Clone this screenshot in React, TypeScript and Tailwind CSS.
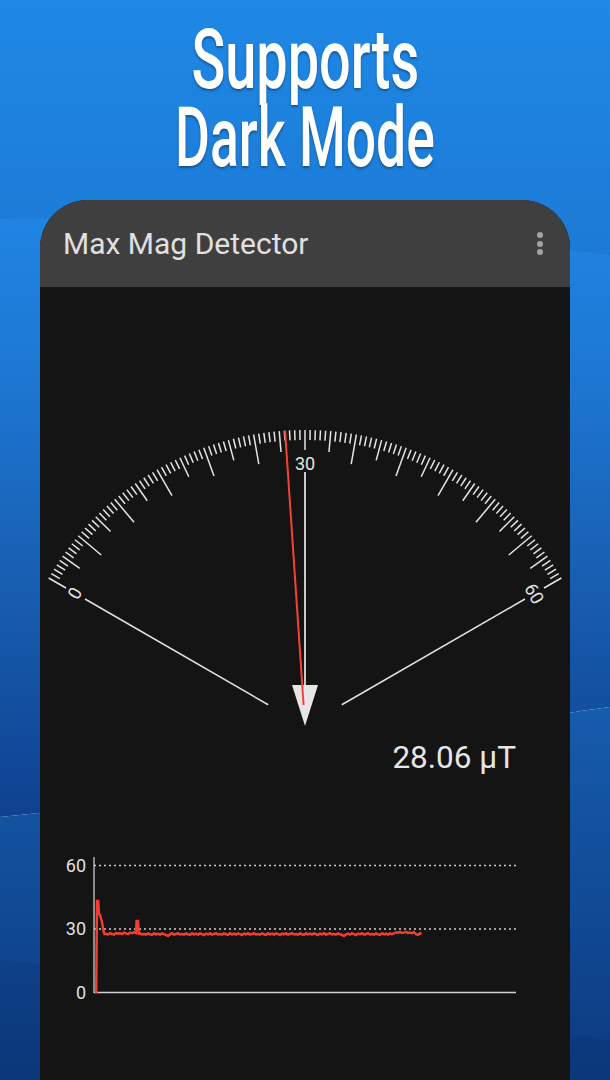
const GAUGE_CX = 305
const GAUGE_CY = 726

function polar(deg: number, r: number) {
  const a = (deg * Math.PI) / 180
  return { x: GAUGE_CX + r * Math.sin(a), y: GAUGE_CY - r * Math.cos(a) }
}

const font = "'Roboto', 'Liberation Sans', sans-serif"

function Backdrop() {
  return (
    <svg className="absolute inset-0" width="610" height="1080" viewBox="0 0 610 1080">
      <defs>
        <linearGradient id="mid" gradientUnits="userSpaceOnUse" x1="0" y1="219" x2="0" y2="817">
          <stop offset="0" stopColor="#2084e2" />
          <stop offset="0.25" stopColor="#1d78d4" />
          <stop offset="0.6" stopColor="#185fb2" />
          <stop offset="1" stopColor="#0f4190" />
        </linearGradient>
        <linearGradient id="low" gradientUnits="userSpaceOnUse" x1="0" y1="707" x2="0" y2="1080">
          <stop offset="0" stopColor="#165cad" />
          <stop offset="1" stopColor="#0c3a80" />
        </linearGradient>
      </defs>
      <path d="M0 219 C200 215 400 230 610 255 V707 C400 735 200 800 0 817 Z" fill="url(#mid)" />
      <path d="M0 817 C200 800 400 735 610 707 V1080 H0 Z" fill="url(#low)" />
      <path d="M0 960 C200 975 400 1010 610 1040 V1080 H0 Z" fill="#000000" fillOpacity={0.05} />
    </svg>
  )
}

function Gauge() {
  const ticks = []
  for (let d = -60; d <= 60; d++) {
    let inner = 286
    if (d % 5 === 0) inner = 275
    if (d % 10 === 0) inner = 266
    if (d % 60 === 0) inner = 276
    const a = polar(d, 296)
    const b = polar(d, inner)
    ticks.push(<line key={d} x1={a.x} y1={a.y} x2={b.x} y2={b.y} stroke="#e4e4e4" strokeWidth={1.5} />)
  }
  const rays = [-60, 60].map((d) => {
    const a = polar(d, 254)
    const b = polar(d, 42.5)
    return <line key={d} x1={a.x} y1={a.y} x2={b.x} y2={b.y} stroke="#e0e0e0" strokeWidth={1.5} />
  })
  const n0 = polar(-60, 266)
  const n1 = polar(60, 265)
  const needleTop = polar(-3.86, 296)
  const needleEnd = polar(-3.86, 21)
  return (
    <svg width="530" height="320" viewBox="40 420 530 320" className="block">
      {ticks}
      {rays}
      <line x1={305} y1={472} x2={305} y2={700} stroke="#c8c8c8" strokeWidth={2} />
      <text x={305} y={470} fontSize={18} fill="#e4e4e4" textAnchor="middle" fontFamily={font}>30</text>
      <text transform={`translate(${n0.x} ${n0.y}) rotate(-60)`} y={6.5} fontSize={18} fill="#e4e4e4" textAnchor="middle" fontFamily={font}>0</text>
      <text transform={`translate(${n1.x} ${n1.y}) rotate(60)`} y={6.5} fontSize={18} fill="#e4e4e4" textAnchor="middle" fontFamily={font}>60</text>
      <polygon points="292,685 318,685 305,726" fill="#e6e6e6" />
      <line x1={needleTop.x} y1={needleTop.y} x2={needleEnd.x} y2={needleEnd.y} stroke="#f44336" strokeWidth={2} />
    </svg>
  )
}

function seriesPoints() {
  const pts: [number, number][] = [
    [95, 992], [96.2, 992], [97, 901], [98.2, 901], [99, 914], [100, 915], [102, 922], [103.5, 931], [104.5, 934],
  ]
  const noise = [0, 1, -1, 0.4, 1.5, -1.2, 0.6, -0.5, 1.1, -1, 0.2, 1.6, -0.7, 0.5, -1.3, 0.9, 0.1, -1.5, 0.7]
  for (let x = 106; x <= 420; x += 2) {
    const i = Math.round((x - 106) / 2)
    let y = 934 + noise[i % noise.length] * 0.6
    if (x < 136) y -= (x - 106) / 25
    if (x > 166 && x < 170) y = 936
    if (x > 342 && x < 346) y = 936
    if (x > 392 && x < 416) y = 932.6 + noise[i % noise.length] * 0.5
    if (x === 136) {
      pts.push([136, 933], [136.6, 921], [138, 921], [138.8, 933])
      continue
    }
    pts.push([x, y])
  }
  pts.push([421.5, 934])
  return pts.map((p) => p.join(',')).join(' ')
}

function Chart() {
  return (
    <svg width="530" height="160" viewBox="40 850 530 160" className="block">
      <line x1={94} y1={857} x2={94} y2={993} stroke="#bdbdbd" strokeWidth={1.4} />
      <line x1={94} y1={992.5} x2={516} y2={992.5} stroke="#cfcfcf" strokeWidth={1.5} />
      <line x1={94} y1={865.5} x2={516} y2={865.5} stroke="#d0d0d0" strokeWidth={1.6} strokeDasharray="2 3" />
      <line x1={94} y1={929} x2={516} y2={929} stroke="#d0d0d0" strokeWidth={1.6} strokeDasharray="2 3" />
      <text x={86} y={871.5} fontSize={18} fill="#e0e0e0" textAnchor="end" fontFamily={font}>60</text>
      <text x={86} y={935} fontSize={18} fill="#e0e0e0" textAnchor="end" fontFamily={font}>30</text>
      <text x={86} y={998.5} fontSize={18} fill="#e0e0e0" textAnchor="end" fontFamily={font}>0</text>
      <polyline points={seriesPoints()} fill="none" stroke="#f23d30" strokeWidth={2.5} />
    </svg>
  )
}

export default function App() {
  return (
    <div className="relative flex h-[1080px] w-[610px] flex-col overflow-hidden bg-gradient-to-b from-[#1f88e5] to-[#1c7ad6] bg-[length:100%_260px] bg-no-repeat">
      <Backdrop />
      <div className="relative flex h-[200px] flex-col items-center pt-[21px] text-[84px] leading-[78px] whitespace-nowrap text-white [font-family:Roboto,sans-serif] [text-shadow:0_2px_3px_rgba(0,0,0,0.35)]">
        <h1 className="scale-x-[0.665] font-medium">Supports</h1>
        <h1 className="scale-x-[0.637] font-medium">Dark Mode</h1>
      </div>
      <div className="relative mx-[40px] flex flex-1 flex-col overflow-hidden rounded-t-[48px] bg-[#141414]">
        <div className="flex h-[87px] items-center justify-between bg-[#3f3f3f] pr-[27px] pl-[23px]">
          <span className="text-[30px] text-[#e0e0e0] [font-family:Roboto,sans-serif]">Max Mag Detector</span>
          <div className="flex flex-col gap-[2.4px]">
            <div className="h-[6px] w-[6px] rounded-full bg-[#a4a4a4]" />
            <div className="h-[6px] w-[6px] rounded-full bg-[#a4a4a4]" />
            <div className="h-[6px] w-[6px] rounded-full bg-[#a4a4a4]" />
          </div>
        </div>
        <div className="mt-[133px]">
          <Gauge />
        </div>
        <div className="-mt-[1px] pr-[54px] text-right text-[31.5px] leading-[38px] text-[#e6e6e6] [font-family:Roboto,sans-serif]">
          28.06 µT
        </div>
        <div className="mt-[73px]">
          <Chart />
        </div>
      </div>
    </div>
  )
}
